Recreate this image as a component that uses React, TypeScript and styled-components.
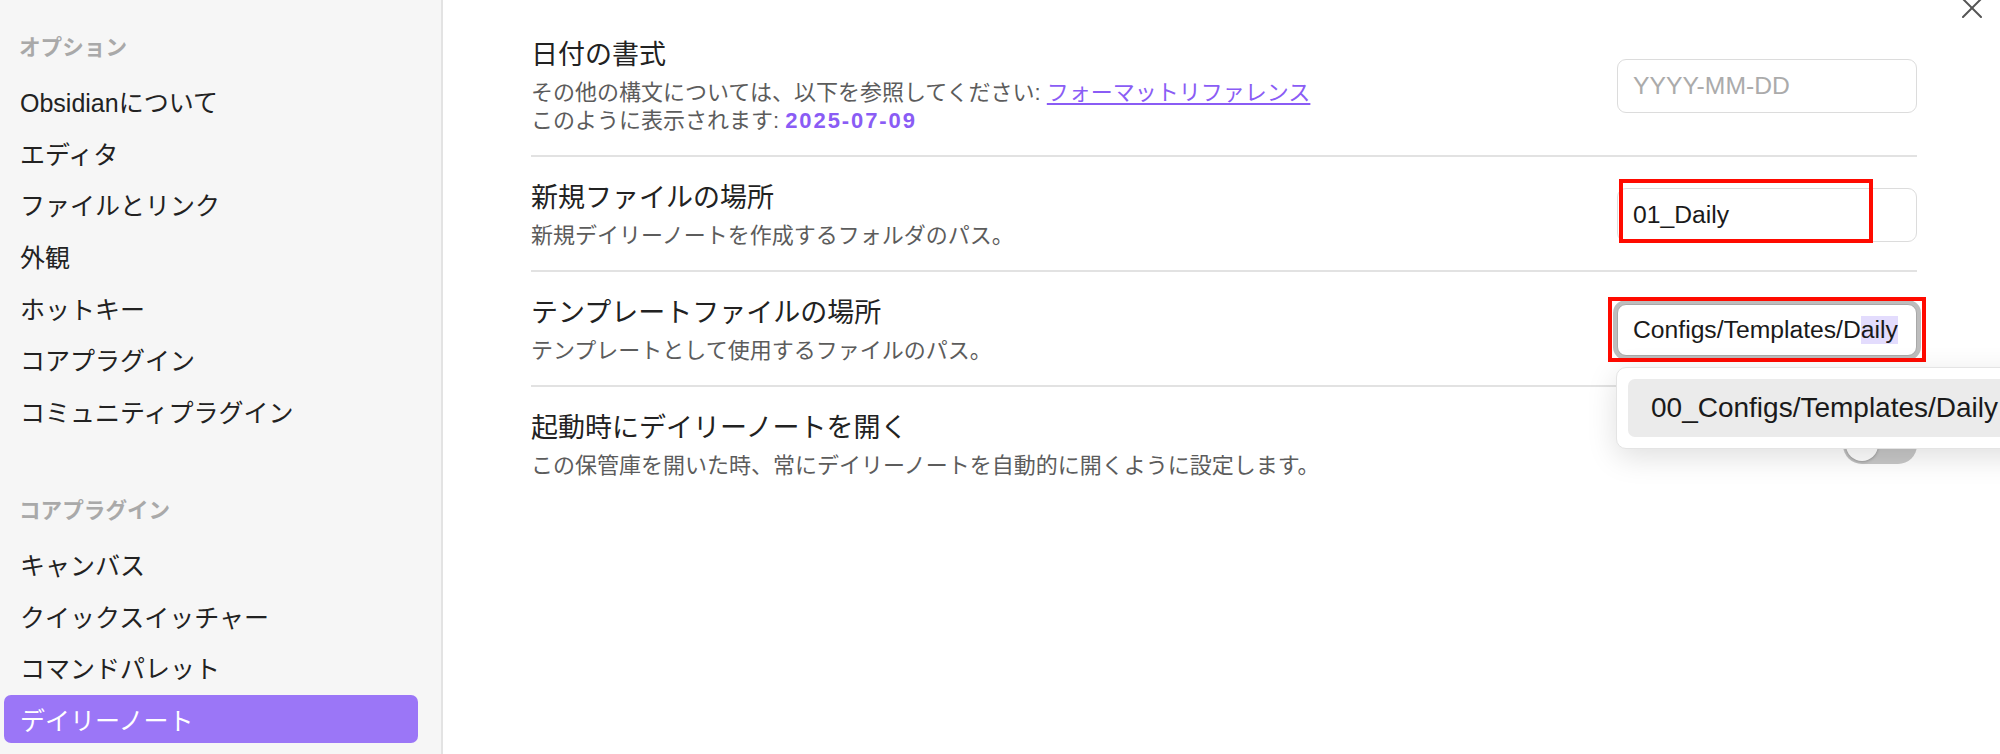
import styled, { createGlobalStyle } from "styled-components";

const GlobalStyle = createGlobalStyle`
  * {
    box-sizing: border-box;
  }
  html, body {
    margin: 0;
    height: 100%;
    overflow: hidden;
    background: #ffffff;
  }
  body {
    font-family: "Liberation Sans", "Noto Sans CJK JP", sans-serif;
    color: #222222;
  }
`;

const Modal = styled.div`
  position: relative;
  display: flex;
  width: 100vw;
  height: 100vh;
  overflow: hidden;
`;

const Sidebar = styled.nav`
  flex: 0 0 443px;
  display: flex;
  flex-direction: column;
  padding: 31px 23px 0 4px;
  background: #f6f6f6;
  border-right: 2px solid #e3e3e3;
`;

const NavGroup = styled.div`
  display: flex;
  flex-direction: column;
  gap: 3.7px;

  & + & {
    margin-top: 58.8px;
  }
`;

const NavHeader = styled.div`
  height: 34px;
  line-height: 34px;
  padding-left: 15px;
  margin-bottom: 8.3px;
  font-size: 21.6px;
  font-weight: 700;
  color: #a9a9a9;
`;

const NavItem = styled.div<{ $active?: boolean }>`
  display: flex;
  align-items: center;
  height: 48px;
  padding: 0 16px;
  border-radius: 7px;
  font-size: 25px;
  color: ${(p) => (p.$active ? "#ffffff" : "#222222")};
  background: ${(p) => (p.$active ? "#9b76f7" : "transparent")};
  white-space: nowrap;
`;

const Content = styled.main`
  flex: 1;
  padding: 14px 83px 0 88px;
`;

const SettingItem = styled.div`
  display: flex;
  align-items: center;
  gap: 40px;
  padding: 23px 0 20px;

  & + & {
    border-top: 2px solid #e2e2e2;
  }
`;

const SettingInfo = styled.div`
  flex: 1;
  min-width: 0;
`;

const SettingName = styled.div`
  font-size: 27px;
  line-height: 36px;
  color: #222222;
`;

const SettingDesc = styled.div`
  margin-top: 6px;
  font-size: 22px;
  line-height: 28px;
  color: #5c5c5c;
`;

const Link = styled.a`
  color: #8a5cf5;
  text-decoration: underline;
  text-underline-offset: 3px;
`;

const Pop = styled.span`
  color: #8a5cf5;
  font-weight: 700;
  letter-spacing: 1.9px;
`;

const Control = styled.div`
  position: relative;
  flex: none;
`;

const TextInput = styled.input`
  display: block;
  width: 300px;
  height: 54px;
  padding: 0 15px;
  border: 1.5px solid #dcdcdc;
  border-radius: 9px;
  background: #ffffff;
  font-family: inherit;
  font-size: 24.7px;
  color: #1a1a1a;
  outline: none;

  &::placeholder {
    color: #ababab;
  }
`;

const FocusedField = styled.div`
  display: flex;
  align-items: center;
  width: 300px;
  height: 52px;
  padding: 0 15px;
  border: 1px solid #a8a8a8;
  border-radius: 9px;
  background: #ffffff;
  box-shadow: 0 0 0 4px #bdbdbd;
  font-size: 24.7px;
  color: #1a1a1a;
  white-space: nowrap;
  overflow: hidden;
`;

const Selection = styled.span`
  background: #e3dcfd;
`;

const Annotation = styled.div<{ $top: number; $left: number; $w: number; $h: number }>`
  position: absolute;
  top: ${(p) => p.$top}px;
  left: ${(p) => p.$left}px;
  width: ${(p) => p.$w}px;
  height: ${(p) => p.$h}px;
  border: 4px solid #ff0a00;
  pointer-events: none;
  z-index: 5;
`;

const Suggestions = styled.div`
  position: absolute;
  top: calc(100% + 11px);
  left: -1px;
  z-index: 10;
  width: 440px;
  padding: 11px;
  background: #ffffff;
  border: 1px solid #e4e4e4;
  border-radius: 10px;
  box-shadow: 0 8px 30px rgba(0, 0, 0, 0.13);
`;

const SuggestionItem = styled.div<{ $selected?: boolean }>`
  display: flex;
  align-items: center;
  height: 58px;
  padding-left: 23px;
  border-radius: 7px;
  background: ${(p) => (p.$selected ? "#ebebeb" : "transparent")};
  font-size: 28px;
  color: #1a1a1a;
  white-space: nowrap;
`;

const Toggle = styled.div<{ $on?: boolean }>`
  position: relative;
  width: 74px;
  height: 38px;
  border-radius: 19px;
  background: ${(p) => (p.$on ? "#8a5cf5" : "#c8c8c8")};

  &::after {
    content: "";
    position: absolute;
    top: 3px;
    left: ${(p) => (p.$on ? "39px" : "3px")};
    width: 32px;
    height: 32px;
    border-radius: 50%;
    background: #ffffff;
    box-shadow: 0 1px 3px rgba(0, 0, 0, 0.25);
  }
`;

const CloseButton = styled.button`
  position: absolute;
  top: -2px;
  right: 18px;
  width: 20px;
  height: 20px;
  padding: 0;
  border: none;
  background: none;
  color: #555555;
  cursor: pointer;
`;

const optionItems = [
  "Obsidianについて",
  "エディタ",
  "ファイルとリンク",
  "外観",
  "ホットキー",
  "コアプラグイン",
  "コミュニティプラグイン",
];

const pluginItems = ["キャンバス", "クイックスイッチャー", "コマンドパレット", "デイリーノート"];

export default function App() {
  return (
    <>
      <GlobalStyle />
      <Modal>
        <Sidebar>
          <NavGroup>
            <NavHeader>オプション</NavHeader>
            {optionItems.map((label) => (
              <NavItem key={label}>{label}</NavItem>
            ))}
          </NavGroup>
          <NavGroup>
            <NavHeader>コアプラグイン</NavHeader>
            {pluginItems.map((label) => (
              <NavItem key={label} $active={label === "デイリーノート"}>
                {label}
              </NavItem>
            ))}
          </NavGroup>
        </Sidebar>

        <Content>
          <SettingItem>
            <SettingInfo>
              <SettingName>日付の書式</SettingName>
              <SettingDesc>
                その他の構文については、以下を参照してください: <Link>フォーマットリファレンス</Link>
                <br />
                このように表示されます: <Pop>2025-07-09</Pop>
              </SettingDesc>
            </SettingInfo>
            <Control>
              <TextInput placeholder="YYYY-MM-DD" readOnly />
            </Control>
          </SettingItem>

          <SettingItem>
            <SettingInfo>
              <SettingName>新規ファイルの場所</SettingName>
              <SettingDesc>新規デイリーノートを作成するフォルダのパス。</SettingDesc>
            </SettingInfo>
            <Control>
              <TextInput value="01_Daily" readOnly />
              <Annotation $top={-9} $left={2} $w={254} $h={64} />
            </Control>
          </SettingItem>

          <SettingItem>
            <SettingInfo>
              <SettingName>テンプレートファイルの場所</SettingName>
              <SettingDesc>テンプレートとして使用するファイルのパス。</SettingDesc>
            </SettingInfo>
            <Control>
              <FocusedField>
                Configs/Templates/D<Selection>aily</Selection>
              </FocusedField>
              <Annotation $top={-7} $left={-9} $w={318} $h={65} />
              <Suggestions>
                <SuggestionItem $selected>00_Configs/Templates/Daily</SuggestionItem>
              </Suggestions>
            </Control>
          </SettingItem>

          <SettingItem>
            <SettingInfo>
              <SettingName>起動時にデイリーノートを開く</SettingName>
              <SettingDesc>この保管庫を開いた時、常にデイリーノートを自動的に開くように設定します。</SettingDesc>
            </SettingInfo>
            <Control>
              <Toggle />
            </Control>
          </SettingItem>
        </Content>

        <CloseButton aria-label="閉じる">
          <svg width="20" height="20" viewBox="0 0 20 20" fill="none" stroke="currentColor" strokeWidth="2" strokeLinecap="round">
            <path d="M1 1 19 19" />
            <path d="M19 1 1 19" />
          </svg>
        </CloseButton>
      </Modal>
    </>
  );
}
